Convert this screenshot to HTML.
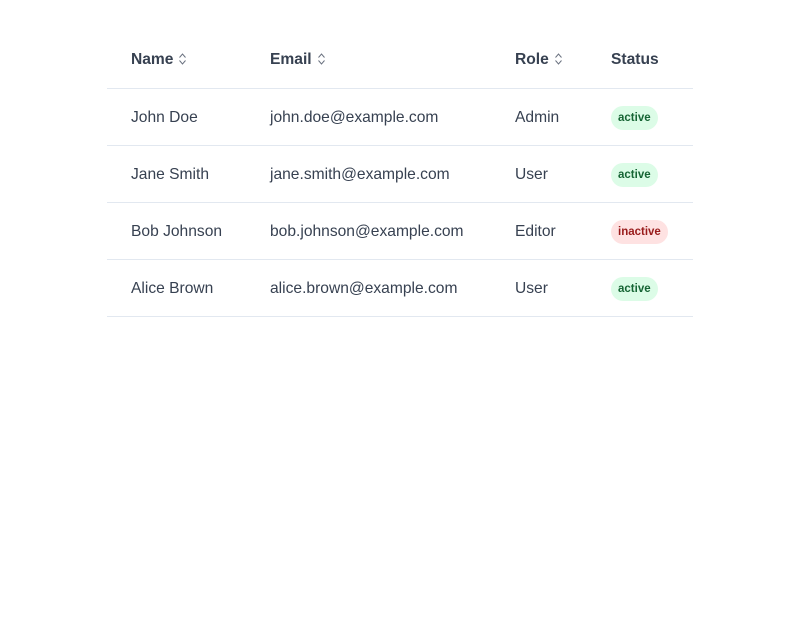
<!DOCTYPE html>
<html><head><style>
body{margin:0;background:#fff;font-family:"Liberation Sans",sans-serif;color:#374151}
table{position:absolute;left:107px;top:32px;width:586px;border-collapse:collapse}
th,td{text-align:left;padding:0 0 0 24px;font-size:15.6px}
th{height:56px;font-weight:bold;color:#374151;border-bottom:1px solid #e2e8f0}
td{height:54px;border-bottom:1px solid #e2e8f0;padding-top:2px}
.c1{width:115px}.c2{width:221px}.c3{width:72px}
.s{display:inline-block;width:9px;height:14px;margin-left:5px;vertical-align:-2px}
.b{display:inline-block;height:24px;line-height:24px;padding:0 7px;border-radius:12px;font-size:11.5px;font-weight:bold;vertical-align:middle}
.a{background:#dcfce7;color:#166534}.i{background:#fee2e2;color:#991b1b}
</style></head><body>
<table>
<tr><th class="c1">Name<svg class="s" viewBox="0 0 9 14"><path d="M1.5 5.5L4.5 2L7.5 5.5M1.5 8.5L4.5 12L7.5 8.5" fill="none" stroke="#6b7280" stroke-width="1"/></svg></th>
<th class="c2">Email<svg class="s" viewBox="0 0 9 14"><path d="M1.5 5.5L4.5 2L7.5 5.5M1.5 8.5L4.5 12L7.5 8.5" fill="none" stroke="#6b7280" stroke-width="1"/></svg></th>
<th class="c3">Role<svg class="s" viewBox="0 0 9 14"><path d="M1.5 5.5L4.5 2L7.5 5.5M1.5 8.5L4.5 12L7.5 8.5" fill="none" stroke="#6b7280" stroke-width="1"/></svg></th>
<th>Status</th></tr>
<tr><td>John Doe</td><td>john.doe@example.com</td><td>Admin</td><td><span class="b a">active</span></td></tr>
<tr><td>Jane Smith</td><td>jane.smith@example.com</td><td>User</td><td><span class="b a">active</span></td></tr>
<tr><td>Bob Johnson</td><td>bob.johnson@example.com</td><td>Editor</td><td><span class="b i">inactive</span></td></tr>
<tr><td>Alice Brown</td><td>alice.brown@example.com</td><td>User</td><td><span class="b a">active</span></td></tr>
</table>
</body></html>
